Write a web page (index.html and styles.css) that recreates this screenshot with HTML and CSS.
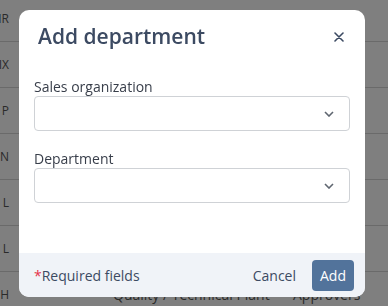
FILE: index.html
```html
<!DOCTYPE html>
<html>
  <head>
    <meta charset="utf-8" />
    <title>Departments</title>
    <meta name="viewport" content="width=device-width, initial-scale=1" />
    <link rel="stylesheet" href="styles.css">
  </head>

  <body>
    <div class="table">
      <div class="row"><span class="code">IR</span></div>
      <div class="row"><span class="code">IX</span></div>
      <div class="row"><span class="code">P</span></div>
      <div class="row"><span class="code">N</span></div>
      <div class="row"><span class="code">L</span></div>
      <div class="row"><span class="code">L</span></div>
      <div class="row"><span class="code">H</span><span></span><span>Quality / Technical Plant</span><span>Approvers</span></div>
    </div>

    <div class="overlay">
      <div class="modal">
        <div class="modal-header">
          <h2 class="modal-title">Add department</h2>
          <button class="close" type="button" aria-label="Close">
            <svg width="10" height="10" viewBox="0 0 10 10">
              <path d="M1 1 L9 9 M9 1 L1 9" stroke="#3c4a62" stroke-width="1.6" fill="none" stroke-linecap="round" />
            </svg>
          </button>
        </div>

        <div class="modal-body">
          <div class="field">
            <label class="label">Sales organization</label>
            <div class="select">
              <svg width="10" height="6" viewBox="0 0 10 6">
                <path d="M1 1 L5 5 L9 1" stroke="#5f6670" stroke-width="1.6" fill="none" />
              </svg>
            </div>
          </div>
          <div class="field">
            <label class="label">Department</label>
            <div class="select">
              <svg width="10" height="6" viewBox="0 0 10 6">
                <path d="M1 1 L5 5 L9 1" stroke="#5f6670" stroke-width="1.6" fill="none" />
              </svg>
            </div>
          </div>
        </div>

        <div class="modal-footer">
          <span class="required"><span class="star">*</span>Required fields</span>
          <button class="btn btn-link" type="button">Cancel</button>
          <button class="btn btn-primary" type="button">Add</button>
        </div>
      </div>
    </div>
  </body>
</html>
```

FILE: styles.css
```css
* {
    box-sizing: border-box;
    font-family: 'Open Sans', 'Noto Sans', sans-serif;
}

body {
    margin: 0;
    background-color: #fff;
    overflow: hidden;
}

/* page table behind the dialog */
.table {
    margin-top: -4px;
    font-size: 14px;
    color: #555;
}

.row {
    display: grid;
    grid-template-columns: 10px 103px 180px 1fr;
    align-items: center;
    height: 46px;
    border-bottom: 1px solid #d4d4d4;
    white-space: nowrap;
}

.code {
    display: flex;
    justify-content: flex-end;
    overflow: hidden;
    padding-right: 1px;
    font-size: 12px;
}

/* dialog */
.overlay {
    position: fixed;
    inset: 0;
    display: flex;
    align-items: flex-start;
    padding: 10px 0 0 19px;
    background-color: rgba(0, 0, 0, 0.5);
}

.modal {
    display: flex;
    flex-direction: column;
    width: 346px;
    height: 287px;
    background-color: #fff;
    border-radius: 10px;
    overflow: hidden;
}

.modal-header {
    display: flex;
    align-items: center;
    justify-content: space-between;
    padding: 12px 21px 0 19px;
}

.modal-title {
    margin: 0;
    font-size: 21px;
    font-weight: 600;
    color: #3c4a62;
}

.close {
    display: flex;
    padding: 0;
    margin-top: 2px;
    border: none;
    background: transparent;
}

.modal-body {
    flex: 1;
    padding: 27px 15px 0 15px;
}

.field {
    margin-bottom: 18px;
}

.label {
    display: block;
    font-size: 14px;
    color: #383e4a;
}

.select {
    display: flex;
    align-items: center;
    justify-content: flex-end;
    height: 35px;
    padding-right: 15px;
    border: 1px solid #cfd2d6;
    border-radius: 4px;
}

.modal-footer {
    display: flex;
    align-items: center;
    gap: 8px;
    height: 44px;
    padding: 0 11px 0 15px;
    background-color: #f0f3f8;
}

.required {
    flex: 1;
    font-size: 14px;
    color: #3c4a62;
}

.star {
    color: #e5334b;
}

.btn {
    height: 31px;
    padding: 0 8px;
    border: none;
    border-radius: 4px;
    font-size: 14px;
}

.btn-link {
    background: transparent;
    color: #3c4a62;
}

.btn-primary {
    background-color: #52739b;
    color: #fff;
}
```
